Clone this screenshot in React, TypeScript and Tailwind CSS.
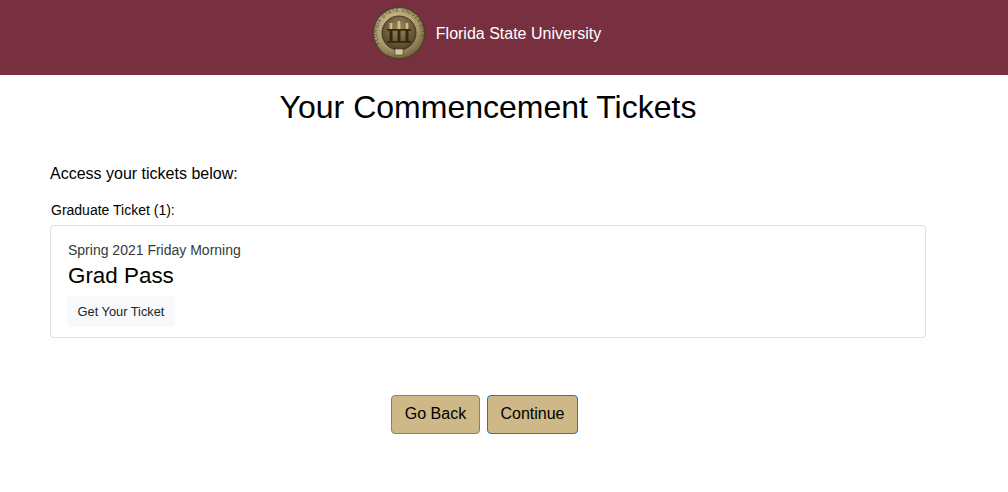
const font = "font-['Liberation_Sans',Arial,sans-serif]";

function Seal() {
  return (
    <svg width="54" height="54" viewBox="0 0 54 54" className="shrink-0">
      <defs>
        <radialGradient id="rim" cx="42%" cy="35%" r="70%">
          <stop offset="0%" stopColor="#d4c79c" />
          <stop offset="65%" stopColor="#a8976a" />
          <stop offset="100%" stopColor="#6a5c3c" />
        </radialGradient>
        <radialGradient id="inner" cx="50%" cy="35%" r="65%">
          <stop offset="0%" stopColor="#9c8758" />
          <stop offset="100%" stopColor="#4f4228" />
        </radialGradient>
        <path id="sealArc" d="M7.500 38 A22 22 0 1 1 46.500 38" />
      </defs>
      <circle cx="27" cy="27" r="26.500" fill="#4e4329" />
      <circle cx="27" cy="27" r="25" fill="url(#rim)" />
      <text fontSize="5" fill="#4a3d24" fontFamily="Liberation Sans, Arial, sans-serif" letterSpacing="0.55">
        <textPath href="#sealArc">FLORIDA STATE UNIVERSITY</textPath>
      </text>
      <circle cx="27" cy="27" r="17" fill="url(#inner)" stroke="#3f3420" />
      <path d="M15 23h24v1.800H15zM17.500 24.800h3V35h-3zM25.500 24.800h3V35h-3zM33.500 24.800h3V35h-3zM15 35h24v1.800H15z" fill="#33290f" />
      <path d="M19 17v6M27 15v8M35 17v6" stroke="#cdbd8e" strokeWidth="2.600" />
      <rect x="23" y="43" width="8" height="6" fill="#d4c79c" stroke="#4a3d24" strokeWidth="0.600" />
    </svg>
  );
}

export default function App() {
  return (
    <div className={`${font} min-h-[492px] bg-white text-black`}>
      <header className="flex h-[75px] items-start justify-center bg-[#782f40] pr-[35px] pt-[6px] text-white">
        <Seal />
        <span className="ml-[10px] mt-[18px] text-base leading-[20px]">Florida State University</span>
      </header>
      <main className="w-[976px] px-[50px]">
        <h1 className="mt-[13px] text-center text-[32px] leading-[38px]">Your Commencement Tickets</h1>
        <p className="mt-[36px] text-base leading-[24px]">Access your tickets below:</p>
        <p className="mt-[14px] pl-px text-sm leading-[21px]">Graduate Ticket (1):</p>
        <div className="mt-[4px] h-[113px] rounded-[4px] border border-[#dfdfdf] px-[16px] pt-[14px]">
          <p className="pl-px text-sm leading-[21px] text-[#343a40]">Spring 2021 Friday Morning</p>
          <p className="mt-[2px] pl-px text-[22.4px] leading-[26px]">Grad Pass</p>
          <button className="mt-[7px] block h-[31px] w-[108px] rounded-[4px] bg-[#f8f9fa] text-[12.8px] leading-[18px] text-[#212529]">
            Get Your Ticket
          </button>
        </div>
        <div className="mt-[57px] flex justify-center gap-[7px] pr-[7px]">
          <button className="h-[39px] w-[89px] rounded-[4px] border border-[#808080] bg-[#ceb888] pb-[2px] text-base">Go Back</button>
          <button className="h-[39px] w-[91px] rounded-[4px] border border-[#007bff] bg-[#ceb888] pb-[2px] text-base">Continue</button>
        </div>
      </main>
    </div>
  );
}
